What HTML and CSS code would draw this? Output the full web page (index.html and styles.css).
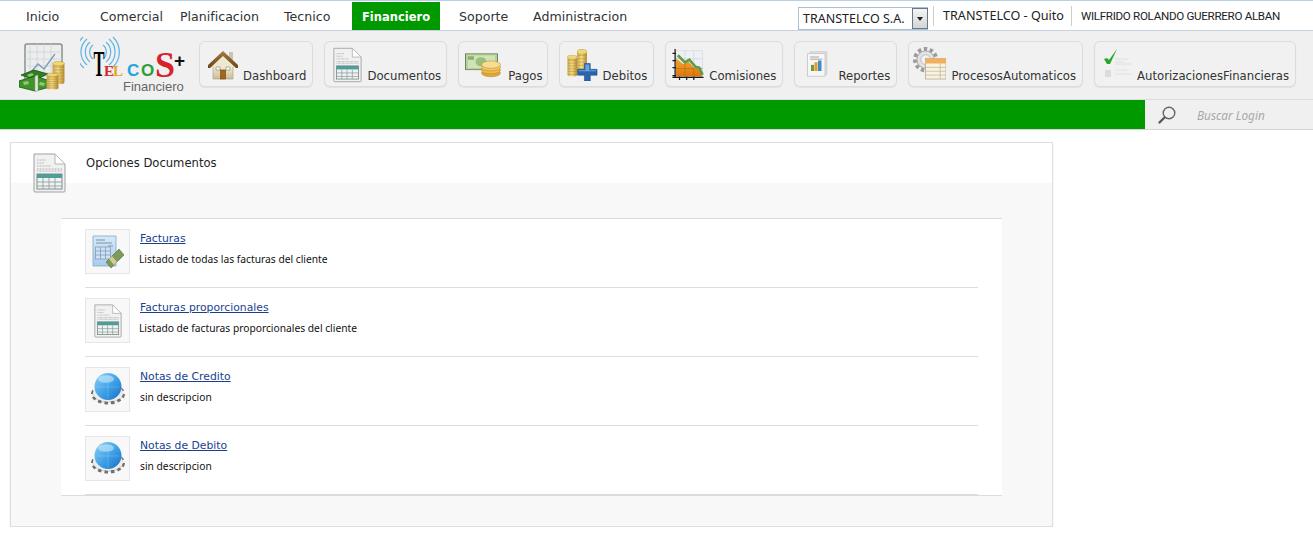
FILE: index.html
```
<!DOCTYPE html>
<html lang="es">
<head>
<meta charset="utf-8">
<title>Opciones Documentos</title>
<link rel="stylesheet" href="styles.css">
</head>
<body>
<svg class="defs" aria-hidden="true">
  <defs>
    <linearGradient id="gold" x1="0" x2="1" y1="0" y2="0"><stop offset="0" stop-color="#c9a94e"/><stop offset=".45" stop-color="#f3dc8c"/><stop offset="1" stop-color="#b58a2a"/></linearGradient>
    <linearGradient id="glob" x1="0" x2="1" y1="0" y2="1"><stop offset="0" stop-color="#8fd0f5"/><stop offset=".55" stop-color="#3c9fe6"/><stop offset="1" stop-color="#1c6fc0"/></linearGradient>
    <linearGradient id="bluepage" x1="0" x2="0" y1="0" y2="1"><stop offset="0" stop-color="#d8e9f8"/><stop offset="1" stop-color="#a9cdec"/></linearGradient>
    <linearGradient id="roof" x1="0" x2="0" y1="0" y2="1"><stop offset="0" stop-color="#a9793f"/><stop offset="1" stop-color="#6b4518"/></linearGradient>
    <linearGradient id="wall" x1="0" x2="0" y1="0" y2="1"><stop offset="0" stop-color="#fbf5e0"/><stop offset="1" stop-color="#c9bc97"/></linearGradient>
    <linearGradient id="orange" x1="0" x2="0" y1="0" y2="1"><stop offset="0" stop-color="#f6a62e"/><stop offset="1" stop-color="#d9770f"/></linearGradient>
    <symbol id="stack" viewBox="0 0 12 24" preserveAspectRatio="none">
      <rect x="0.5" y="2" width="11" height="21" rx="2" fill="url(#gold)"/>
      <path d="M1 6h10M1 9h10M1 12h10M1 15h10M1 18h10M1 21h10" stroke="#a67f22" stroke-width=".6" opacity=".7"/>
      <ellipse cx="6" cy="2.6" rx="5.5" ry="2.2" fill="#f1d877" stroke="#b58f30" stroke-width=".5"/>
    </symbol>
    <symbol id="doc" viewBox="0 0 33 40">
      <path d="M1 1h21l10 10v27a1 1 0 0 1-1 1H2a1 1 0 0 1-1-1z" fill="#f1f1f1" stroke="#a0a0a0"/>
      <path d="M22 1v10h10z" fill="#fff" stroke="#b5b5b5"/>
      <path d="M4 7h9M4 10h7M4 13h14M4 16h25M4 18h25" stroke="#b5b5b5" stroke-dasharray="1 .5"/>
      <rect x="4" y="21" width="25" height="15" fill="#eef2f0" stroke="#7f8f8f"/>
      <rect x="4" y="21" width="25" height="4" fill="#4f9c98"/>
      <path d="M4 29h25M4 33h25M10 25v11M16 25v11M22 25v11" stroke="#8a9a9a" stroke-width=".8"/>
    </symbol>
    <symbol id="globe" viewBox="0 0 36 33">
      <ellipse cx="18" cy="21" rx="15.500" ry="9" fill="#d6d6d6" stroke="#707070" stroke-width="3" stroke-dasharray="3.500 3"/>
      <ellipse cx="18" cy="20" rx="15" ry="8.500" fill="#ececec"/>
      <circle cx="18" cy="13.500" r="13.500" fill="url(#glob)"/>
      <ellipse cx="16" cy="6" rx="8" ry="3.800" fill="#d3eefb" opacity=".55"/>
      <path d="M7 14h22M18 2v24" stroke="#bfe4f9" stroke-width=".5" opacity=".5"/>
    </symbol>
  </defs>
</svg>

<nav class="topnav">
  <ul class="menu">
    <li class="menu-item m-inicio">Inicio</li>
    <li class="menu-item m-comercial">Comercial</li>
    <li class="menu-item m-plan">Planificacion</li>
    <li class="menu-item m-tecnico">Tecnico</li>
    <li class="menu-item m-fin">Financiero</li>
    <li class="menu-item m-soporte">Soporte</li>
    <li class="menu-item m-admin">Administracion</li>
  </ul>
  <div class="session">
    <div class="company-select">
      <span class="company-name">TRANSTELCO S.A.</span>
      <span class="select-arrow"></span>
    </div>
    <span class="session-cell cell-office">TRANSTELCO - Quito</span>
    <span class="session-cell cell-user">WILFRIDO ROLANDO GUERRERO ALBAN</span>
  </div>
</nav>

<header class="toolbar">
  <svg class="module-icon" viewBox="0 0 50 50" aria-hidden="true">
    <rect x="6" y="2" width="37" height="36" rx="2" fill="#eceeee" stroke="#8d8d8d" stroke-width="1.500"/>
    <path d="M11 2v36M18 2v36M25 2v36M32 2v36M6 10h37M6 17h37M6 24h37M6 31h37" stroke="#cfd3d6" stroke-width=".8"/>
    <path d="M11 31l8-9 6 5 11-15" fill="none" stroke="#7e9ab5" stroke-width="1.300"/>
    <path d="M2 33l13-5 14 4-13 6z" fill="#2f7f1e" stroke="#14530f" stroke-width=".8"/>
    <path d="M0 39l16-5 15 5v6l-15 4-16-4z" fill="#3f952a" stroke="#14530f" stroke-width=".8"/>
    <path d="M4 40l5-1 1 3-5 1zM21 40l5 1-1 3-5-1zM8 33l5-2 2 2-5 2z" fill="#93c87a"/>
    <path d="M16 34l3-1v16l-3 0z" fill="#dfe7da" stroke="#8d9a88" stroke-width=".5"/>
    <use href="#stack" x="33" y="19" width="13" height="24"/>
    <use href="#stack" x="27" y="31" width="13" height="17"/>
  </svg>
  <svg class="logo" viewBox="0 0 105 60" role="img" aria-label="Telcos+ Financiero">
    <g fill="none" stroke="#62b2e2" stroke-width="1.200">
      <path d="M13 23a9 9 0 0 1 0-14M10 26a13 13 0 0 1 0-20M7 29a17 17 0 0 1 0-26M4 32a21 21 0 0 1-1-31"/>
      <path d="M23 23a9 9 0 0 0 0-14M26 26a13 13 0 0 0 0-20M29 29a17 17 0 0 0 0-26M32 32a21 21 0 0 0 1-31"/>
    </g>
    <text class="logo-t" transform="translate(13.500 40) scale(.46 1)">T</text>
    <text class="logo-s l-e" x="24" y="40">E</text>
    <text class="logo-s l-l" x="33" y="40">L</text>
    <text class="logo-r l-c" x="47" y="40">C</text>
    <text class="logo-r l-o" x="61" y="40">O</text>
    <text class="logo-big" x="75" y="41">S</text>
    <text class="logo-plus" x="94" y="31">+</text>
    <text class="logo-sub" x="43" y="55">Financiero</text>
  </svg>

  <div class="tools">
    <a class="tool t-dash">
      <svg class="ti ti-dash" viewBox="0 0 30 29" aria-hidden="true">
        <rect x="21" y="1" width="4" height="10" fill="#c9c4b4"/>
        <path d="M5 13h20v15H5z" fill="url(#wall)" stroke="#a69a7c" stroke-width=".6"/>
        <path d="M15 5L5 14v2h20v-2z" fill="#efe8d0"/>
        <path d="M15 0L0 14v3h2L15 5l13 12h2v-3z" fill="url(#roof)"/>
        <rect x="12.500" y="19" width="5" height="9" fill="#a4641c" stroke="#6d4010" stroke-width=".6"/>
        <path d="M8 16h4v3H8zM18 16h4v3h-4z" fill="#fff" stroke="#8b7b5a" stroke-width=".6"/>
      </svg>
      <span>Dashboard</span>
    </a>
    <a class="tool t-docs">
      <svg class="ti ti-docs" aria-hidden="true"><use href="#doc"/></svg>
      <span>Documentos</span>
    </a>
    <a class="tool t-pagos">
      <svg class="ti ti-pagos" viewBox="0 0 36 30" preserveAspectRatio="none" aria-hidden="true">
        <rect x="0.500" y="1" width="32" height="19" fill="#b6d296" stroke="#6f7f63"/>
        <rect x="3" y="3" width="27" height="15" fill="#cfe3b4"/>
        <circle cx="16" cy="10.500" r="5.500" fill="#9dbd7e"/>
        <path d="M3 4h6v4H3zM24 13h6v4h-6z" fill="#8caf6d"/>
        <g stroke="#b27d1d" stroke-width=".5">
          <ellipse cx="26" cy="24" rx="9.500" ry="4.500" fill="#dfa83a"/>
          <ellipse cx="26" cy="20.500" rx="9.500" ry="4.500" fill="#eebb50"/>
          <ellipse cx="26" cy="17" rx="9.500" ry="4.500" fill="#f3ca69"/>
          <ellipse cx="26" cy="14" rx="9.500" ry="4.500" fill="#f8dc90"/>
        </g>
      </svg>
      <span>Pagos</span>
    </a>
    <a class="tool t-deb">
      <svg class="ti ti-deb" viewBox="0 0 32 33" aria-hidden="true">
        <use href="#stack" x="10" y="0" width="11" height="27"/>
        <use href="#stack" x="0" y="6" width="11" height="23"/>
        <path d="M18 15h6v6h7v6h-7v6h-6v-6h-7v-6h7z" fill="#2a66ad" stroke="#1c4a86" stroke-width=".6"/>
        <path d="M19 16h4v6h-4zM12 22h18v1H12z" fill="#6ba3dc"/>
      </svg>
      <span>Debitos</span>
    </a>
    <a class="tool t-com">
      <svg class="ti ti-com" viewBox="0 0 35 36" aria-hidden="true">
        <rect x="4" y="2" width="30" height="29" fill="#eef0f5" stroke="#cfd2dc" stroke-width=".6"/>
        <path d="M14 2v29M24 2v29M4 11h30M4 21h30" stroke="#c9ccd8" stroke-width=".6"/>
        <path d="M4 10l8 7 6-3 7 8 5 0 4 9H4z" fill="url(#orange)"/>
        <path d="M14 16v15M24 21v10M4 22h30" stroke="#b9650d" stroke-width=".6"/>
        <path d="M6 7l8 8 5-3 7 8 4 1 4 8" fill="none" stroke="#5d9c49" stroke-width="3"/>
        <path d="M3 0v32M0 5h4M0 13h4M0 21h4M0 30h4M0 32h35M8 31v4M16 31v4M24 31v4" stroke="#1a1a1a" stroke-width="1.400" fill="none"/>
      </svg>
      <span>Comisiones</span>
    </a>
    <a class="tool t-rep">
      <svg class="ti ti-rep" viewBox="0 0 26 32" aria-hidden="true">
        <path d="M4 2h19v26H4z" fill="#e4e4e4" stroke="#c8c8c8"/>
        <path d="M1 4h20v26H1z" fill="#f6f6f6" stroke="#c6c6c6"/>
        <path d="M4 8h10M4 10.500h14" stroke="#9a9a9a"/>
        <rect x="5" y="17" width="3.500" height="7" fill="#6c9b3f"/>
        <rect x="9" y="14" width="3.500" height="10" fill="#e89a2b"/>
        <rect x="13" y="12" width="4" height="12" fill="#3f8cc8"/>
      </svg>
      <span>Reportes</span>
    </a>
    <a class="tool t-proc">
      <svg class="ti ti-proc" viewBox="0 0 34 34" aria-hidden="true">
        <circle cx="13" cy="13" r="11" fill="none" stroke="#9a9a9a" stroke-width="4" stroke-dasharray="3.500 2.700"/>
        <circle cx="13" cy="13" r="9" fill="#e2e2e2" stroke="#a5a5a5"/>
        <circle cx="13" cy="13" r="5" fill="#f2f2f2" stroke="#bdbdbd"/>
        <rect x="13" y="12" width="21" height="21" fill="#f8f2de" stroke="#a9a38a" stroke-width=".7"/>
        <rect x="13" y="12" width="21" height="5" fill="#f2b05a"/>
        <path d="M13 21h21M13 25h21M13 29h21M28 17v16" stroke="#b8b199" stroke-width=".7"/>
      </svg>
      <span>ProcesosAutomaticos</span>
    </a>
    <a class="tool t-aut">
      <svg class="ti ti-aut" viewBox="0 0 28 29" aria-hidden="true">
        <path d="M0 10l3-1 2 2L13 0 6 15H3z" fill="#2aa52a"/>
        <path d="M11 10h13M11 13h9M11 15h16" stroke="#e0e0e0" stroke-width="1.200"/>
        <rect x="1" y="21" width="6" height="7" fill="#dcdcdc"/>
        <path d="M11 21h12M11 25h17" stroke="#e2e2e2" stroke-width="1.200"/>
      </svg>
      <span>AutorizacionesFinancieras</span>
    </a>
  </div>
</header>

<div class="greenbar">
  <div class="search">
    <svg class="search-icon" viewBox="0 0 18 18" aria-hidden="true">
      <circle cx="11" cy="7" r="5.800" fill="none" stroke="#666" stroke-width="1.400"/>
      <path d="M6.500 11.500L1.500 16.500" stroke="#5a5a5a" stroke-width="2.400" stroke-linecap="round"/>
    </svg>
    <span class="search-text">Buscar Login</span>
  </div>
</div>

<main class="panel">
  <div class="panel-head">
    <svg class="panel-icon" aria-hidden="true"><use href="#doc"/></svg>
    <h1 class="panel-title">Opciones Documentos</h1>
  </div>
  <div class="panel-body">
    <ul class="list">
      <li class="row">
        <div class="thumb">
          <svg class="thumb-svg" viewBox="0 0 32 34" aria-hidden="true">
            <path d="M1 1h23v30H1z" fill="url(#bluepage)" stroke="#7ea7cc" stroke-width=".8"/>
            <path d="M4 5h9M4 8h16M16 11h5" stroke="#7b93aa"/>
            <rect x="3.500" y="12" width="15" height="12" fill="#cfe1f2" stroke="#7595b5" stroke-width=".7"/>
            <path d="M3.500 16h15M3.500 20h15M8.500 12v12M13.500 12v12" stroke="#7595b5" stroke-width=".7"/>
            <path d="M14 27L27 14l5 6-13 13z" fill="#7d9a5a" stroke="#55703a" stroke-width=".6"/>
            <path d="M20 21l5 6-3 3-5-6z" fill="#d8c89a"/>
          </svg>
        </div>
        <div class="row-text"><a class="row-link">Facturas</a><p class="row-desc">Listado de todas las facturas del cliente</p></div>
      </li>
      <li class="row">
        <div class="thumb"><svg class="thumb-doc" aria-hidden="true"><use href="#doc"/></svg></div>
        <div class="row-text"><a class="row-link">Facturas proporcionales</a><p class="row-desc">Listado de facturas proporcionales del cliente</p></div>
      </li>
      <li class="row">
        <div class="thumb"><svg class="thumb-globe" aria-hidden="true"><use href="#globe"/></svg></div>
        <div class="row-text"><a class="row-link">Notas de Credito</a><p class="row-desc row-desc-in">sin descripcion</p></div>
      </li>
      <li class="row">
        <div class="thumb"><svg class="thumb-globe" aria-hidden="true"><use href="#globe"/></svg></div>
        <div class="row-text"><a class="row-link">Notas de Debito</a><p class="row-desc row-desc-in">sin descripcion</p></div>
      </li>
    </ul>
  </div>
</main>
</body>
</html>
```
FILE: styles.css
```
* { box-sizing: border-box; }
html, body { margin: 0; padding: 0; }
body { background: #fff; color: #222; font-family: "DejaVu Sans", sans-serif; font-size: 12px; overflow: hidden; }
ul { list-style: none; margin: 0; padding: 0; }
h1, p { margin: 0; font-weight: normal; }
.defs { display: block; width: 0; height: 0; }

.topnav { display: flex; justify-content: space-between; height: 31px; border-top: 1px solid #b8d0e6; border-bottom: 1px solid #c6d2de; background: #fff; }
.menu { display: flex; padding-left: 26px; font-size: 12.600px; }
.menu-item { line-height: 30px; height: 28px; margin-top: 1px; color: #333; }
.m-inicio { width: 74px; }
.m-comercial { width: 80px; }
.m-plan { width: 104px; }
.m-tecnico { width: 68px; }
.m-fin { width: 88px; background: #009900; color: #fff; font-weight: bold; text-align: center; font-size: 11.500px; }
.m-soporte { width: 74px; margin-left: 19px; }
.session { display: flex; align-items: flex-start; padding-top: 5px; }
.company-select { display: flex; align-items: center; justify-content: space-between; width: 130px; height: 23px; margin-top: 1px; margin-right: 5px; border: 1px solid #a9c0d4; border-right: 0; font-family: "Noto Sans", sans-serif; font-size: 12.500px; padding-left: 4px; color: #222; }
.select-arrow { display: flex; align-items: center; justify-content: center; width: 16px; height: 21px; border: 1px solid #66788a; background: linear-gradient(#f5f5f5, #d5d5d5); }
.select-arrow::after { content: ""; border-style: solid; border-width: 4px 3.500px 0; border-color: #222 transparent transparent; }
.session-cell { height: 20px; line-height: 20px; font-family: "Noto Sans", sans-serif; border-left: 1px solid #ccc; color: #222; }
.cell-office { padding: 0 7px 0 9px; font-size: 12.600px; }
.cell-user { padding: 0 33px 0 9px; font-family: Roboto, sans-serif; font-size: 11.600px; letter-spacing: -.3px; }

.toolbar { display: flex; align-items: flex-start; height: 69px; background: #f0f0f0; border-bottom: 1px solid #dcdcdc; }
.module-icon { width: 50px; height: 50px; margin: 11px 0 0 19px; flex: none; }
.logo { width: 105px; height: 60px; margin: 5px 0 0 11px; flex: none; }
.logo-t { font: bold 36px "Liberation Serif", serif; fill: #000; }
.logo-s { font: bold 15px "Liberation Serif", serif; }
.logo-r { font: bold 17px "Liberation Sans", sans-serif; }
.l-e { fill: #d8262c; }
.l-l { fill: #e8a422; }
.l-c { fill: #1fa6dc; }
.l-o { fill: #2f9e3a; }
.logo-big { font: bold 36px "Liberation Serif", serif; fill: #d9212b; }
.logo-plus { font: bold 19px "Liberation Sans", sans-serif; fill: #111; }
.logo-sub { font: 13px "Liberation Sans", sans-serif; fill: #666; }

.tools { display: flex; gap: 11px; margin: 10px 0 0 14px; }
.tool { display: flex; flex: none; align-items: flex-end; height: 46px; padding: 0 6px 2px 7px; gap: 5px; background: #f1f1f1; border: 1px solid #dcdcdc; border-radius: 6px; box-shadow: 0 1px 1px #e0e0e0; color: #333; font-size: 11.700px; line-height: 16px; }
.ti { flex: none; align-self: flex-start; }
.ti-dash { width: 30px; height: 29px; margin: 9px 0 0 1px; }
.ti-docs { width: 29px; height: 36px; margin: 5px 0 0 1px; }
.t-docs { padding-right: 5px; }
.ti-pagos { width: 36px; height: 25px; margin: 11px 2px 0 -1px; }
.t-pagos { padding-right: 4px; }
.ti-deb { width: 31px; height: 32px; margin-top: 7px; }
.t-com { padding-left: 5px; }
.ti-com { width: 34px; height: 32px; margin: 7px -1px 0 0; }
.ti-rep { width: 26px; height: 28px; margin: 8px 2px 0 3px; }
.t-rep { padding-right: 6px; }
.ti-proc { width: 33px; height: 33px; margin: 5px 0 0 -3px; }
.ti-aut { width: 28px; height: 29px; margin: 7px 0 0 2px; }

.greenbar { display: flex; justify-content: flex-end; height: 30px; background: #009900; border-bottom: 1px solid #d6d6d6; }
.search { display: flex; align-items: center; width: 168px; background: #f0f0f0; padding-left: 13px; }
.search-icon { width: 18px; height: 18px; flex: none; }
.search-text { margin-left: 21px; font-family: "Noto Sans", sans-serif; font-style: italic; font-size: 11.800px; color: #a8a8a8; }

.panel { width: 1043px; height: 385px; margin: 12px 0 0 10px; border: 1px solid #dedede; box-shadow: 0 1px 1px #d4d4d4; background: #f8f8f8; }
.panel-head { display: flex; align-items: flex-start; height: 40px; background: #fff; padding-left: 22px; }
.panel-icon { width: 33px; height: 40px; margin-top: 10px; flex: none; overflow: visible; }
.panel-title { margin-left: 20px; font-size: 11.600px; line-height: 41px; color: #222; }
.panel-body { padding: 35px 50px 0; }
.list { background: #fff; border-top: 1px solid #dcdcdc; border-bottom: 1px solid #dcdcdc; padding: 0 24px; height: 278px; }
.row { display: flex; height: 69px; padding-top: 10px; border-bottom: 1px solid #dddddd; }
.thumb { display: flex; align-items: center; justify-content: center; width: 45px; height: 45px; flex: none; background: #f8f8f8; border: 1px solid #e6e6e6; }
.thumb-svg { width: 32px; height: 34px; }
.thumb-doc { width: 28px; height: 34px; }
.thumb-globe { width: 36px; height: 33px; }
.row-text { margin-left: 9px; }
.row-link { display: block; margin-left: 1px; font-size: 10.800px; line-height: 20px; color: #1a3f8f; text-decoration: underline; }
.row-desc { margin-top: 2px; font-family: "Noto Sans", sans-serif; font-size: 10.250px; line-height: 16px; color: #111; }
.row-desc-in { margin-left: 1px; }
```
